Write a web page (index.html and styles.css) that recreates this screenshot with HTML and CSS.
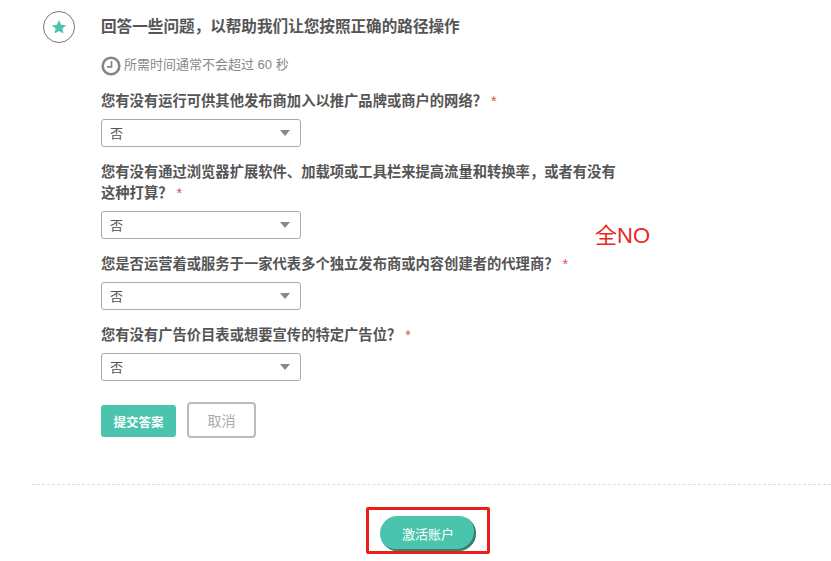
FILE: index.html
```html
<!DOCTYPE html>
<html lang="zh-CN">
<head>
    <meta charset="UTF-8">
    <title>回答一些问题</title>
    <link rel="stylesheet" href="styles.css">
</head>
<body>
    <section class="step">
        <div class="step-icon">
            <svg width="16" height="16" viewBox="0 0 24 24"><path d="M12 1.5l3.2 7 7.6.8-5.7 5.1 1.6 7.5L12 18l-6.700 3.900 1.600-7.500L1.200 9.300l7.600-.8z" fill="#4bc4ae"/></svg>
        </div>
        <form class="step-body">
            <h2>回答一些问题，以帮助我们让您按照正确的路径操作</h2>
            <p class="hint">
                <svg width="20" height="20" viewBox="0 0 20 20" fill="none"><circle cx="10" cy="10" r="8.300" stroke="#858585" stroke-width="2.600"/><path d="M10.500 5v5.800H6" stroke="#858585" stroke-width="1.700"/></svg>
                所需时间通常不会超过 60 秒
            </p>
            <div class="question">
                <label>您有没有运行可供其他发布商加入以推广品牌或商户的网络？<span class="req">*</span></label>
                <div class="select-box"><select><option>否</option></select></div>
            </div>
            <div class="question">
                <label>您有没有通过浏览器扩展软件、加载项或工具栏来提高流量和转换率，或者有没有这种打算？<span class="req">*</span></label>
                <div class="select-box"><select><option>否</option></select></div>
            </div>
            <div class="question">
                <label>您是否运营着或服务于一家代表多个独立发布商或内容创建者的代理商？<span class="req">*</span></label>
                <div class="select-box"><select><option>否</option></select></div>
            </div>
            <div class="question">
                <label>您有没有广告价目表或想要宣传的特定广告位？<span class="req">*</span></label>
                <div class="select-box"><select><option>否</option></select></div>
            </div>
            <div class="actions">
                <button type="button" class="btn-submit">提交答案</button>
                <button type="button" class="btn-cancel">取消</button>
            </div>
        </form>
    </section>
    <div class="note">全NO</div>
    <footer class="footer">
        <div class="mark">
            <button type="button" class="btn-activate">激活账户</button>
        </div>
    </footer>
</body>
</html>
```

FILE: styles.css
```css
body {
    margin: 0;
    height: 561px;
    overflow: hidden;
    background: #fff;
    color: #555;
    font-family: "Liberation Sans", "Noto Sans CJK SC", sans-serif;
    font-size: 13px;
    position: relative;
}
.step {
    display: flex;
    padding: 11px 0 0 43px;
}
.step-icon {
    width: 32px;
    height: 32px;
    box-sizing: border-box;
    border: 1px solid #777;
    border-radius: 50%;
    display: flex;
    align-items: center;
    justify-content: center;
    margin-right: 26px;
    flex-shrink: 0;
}
.step-body {
    width: 520px;
}
h2 {
    margin: 6px 0 0 0;
    font-size: 15.6px;
    line-height: 20px;
    font-weight: bold;
    color: #555;
}
.hint {
    display: flex;
    align-items: flex-start;
    gap: 3px;
    margin: 18px 0 16px 0;
    height: 20px;
    line-height: 20px;
    color: #888;
    font-size: 13px;
}
.hint svg {
    margin-top: 1px;
}
.question {
    margin-bottom: 15px;
}
.question label {
    display: block;
    font-size: 14.3px;
    font-weight: bold;
    line-height: 21px;
    margin-bottom: 7px;
    color: #555;
}
.req {
    color: #d9534f;
    font-weight: normal;
    margin-left: 4px;
}
.select-box {
    width: 200px;
    height: 28px;
    position: relative;
}
.select-box select {
    width: 100%;
    height: 100%;
    box-sizing: border-box;
    appearance: none;
    background: #fff;
    border: 1px solid #aaa;
    border-radius: 3px;
    padding: 0 8px;
    font: inherit;
    color: #555;
}
.select-box::after {
    content: "";
    position: absolute;
    right: 11px;
    top: 11px;
    border-left: 5px solid transparent;
    border-right: 5px solid transparent;
    border-top: 6px solid #888;
}
.actions {
    display: flex;
    align-items: flex-start;
    gap: 11px;
    margin-top: 21px;
}
.btn-submit {
    width: 75px;
    height: 32px;
    margin-top: 3px;
    background: #4bc4ae;
    border: 0;
    border-radius: 3px;
    color: #fff;
    font: inherit;
    font-size: 12.5px;
    font-weight: bold;
}
.btn-cancel {
    width: 69px;
    height: 36px;
    background: #fff;
    border: 2px solid #bbb;
    border-radius: 4px;
    color: #aaa;
    font: inherit;
    font-size: 14px;
}
.note {
    position: absolute;
    left: 595px;
    top: 222px;
    color: #e8281e;
    font-size: 22px;
    line-height: 28px;
}
.footer {
    position: absolute;
    left: 32px;
    right: 0;
    top: 484px;
    border-top: 1px dashed #ddd;
    display: flex;
    justify-content: center;
    padding: 22px 0 0 0;
    box-sizing: border-box;
}
.mark {
    width: 124px;
    height: 47px;
    box-sizing: border-box;
    border: 3px solid #e8201a;
    border-radius: 2px;
    display: flex;
    justify-content: center;
    align-items: flex-end;
    margin-right: 7px;
}
.btn-activate {
    width: 96px;
    height: 35px;
    background: #4bc4ae;
    border: 0;
    border-radius: 18px;
    box-shadow: inset -2px -2px 0 #3a7f72;
    color: #fff;
    font: inherit;
}
```
